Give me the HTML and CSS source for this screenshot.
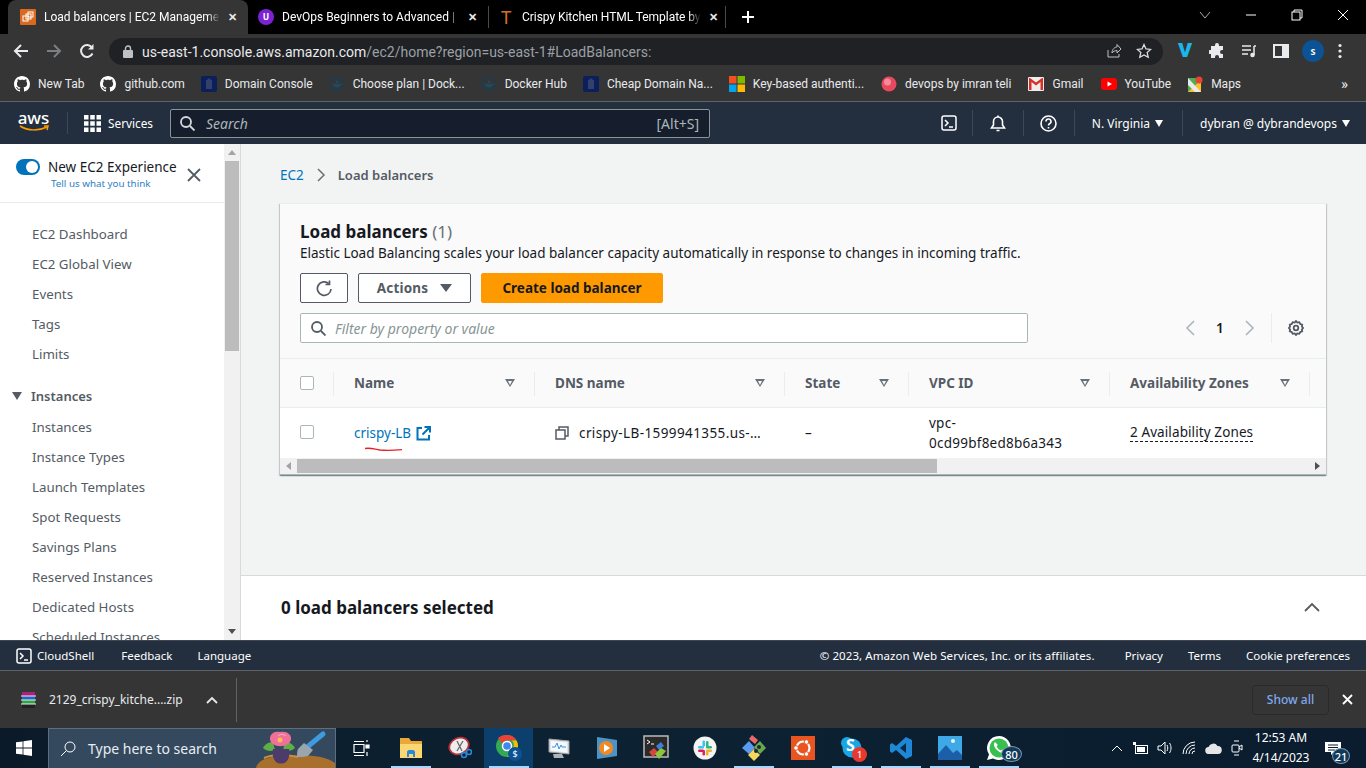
FILE: index.html
```html
<!DOCTYPE html>
<html lang="en">
<head>
    <meta charset="UTF-8">
    <title>Load balancers | EC2 Management Console</title>
    <link rel="stylesheet" href="styles.css">
</head>
<body>
    <!-- browser tabs -->
    <div class="tabstrip">
        <div class="tab active">
            <span class="favicon fav-ec2"><svg width="12" height="12" viewBox="0 0 12 12" fill="none" stroke="#fff" stroke-width="1"><rect x="1" y="5" width="5" height="5"/><rect x="4" y="3" width="5" height="5"/><rect x="6" y="1" width="5" height="5"/></svg></span>
            <span class="tab-title">Load balancers | EC2 Manageme</span>
            <span class="tab-x">✕</span>
        </div>
        <div class="tab">
            <span class="favicon fav-udemy">U</span>
            <span class="tab-title">DevOps Beginners to Advanced |</span>
            <span class="tab-x">✕</span>
        </div>
        <div class="tab last">
            <span class="favicon fav-t">T</span>
            <span class="tab-title">Crispy Kitchen HTML Template by</span>
            <span class="tab-x">✕</span>
        </div>
        <svg class="new-tab" width="14" height="14" viewBox="0 0 14 14" stroke="#fff" stroke-width="2"><path d="M7 1v12M1 7h12"/></svg>
        <div class="win-controls">
            <svg width="14" height="14" viewBox="0 0 14 14" fill="none" stroke="#aaa"><path d="M2 4l5 6 5-6"/></svg>
            <svg width="14" height="14" viewBox="0 0 14 14" fill="none" stroke="#fff"><path d="M2 7h10"/></svg>
            <svg width="14" height="14" viewBox="0 0 14 14" fill="none" stroke="#fff"><rect x="2" y="4" width="8" height="8"/><path d="M4 4V2h8v8h-2"/></svg>
            <svg width="14" height="14" viewBox="0 0 14 14" fill="none" stroke="#fff"><path d="M2 2l10 10M12 2L2 12"/></svg>
        </div>
    </div>

    <!-- address bar -->
    <div class="toolbar">
        <svg class="nav-btn" width="16" height="16" viewBox="0 0 16 16" fill="none" stroke="#e8eaed" stroke-width="2"><path d="M15 8H2M8 2L2 8l6 6"/></svg>
        <svg class="nav-btn" width="16" height="16" viewBox="0 0 16 16" fill="none" stroke="#7c7f82" stroke-width="2"><path d="M1 8h13M8 2l6 6-6 6"/></svg>
        <svg class="nav-btn" width="16" height="16" viewBox="0 0 16 16" fill="none" stroke="#e8eaed" stroke-width="2"><path d="M13.500 10.500A6 6 0 1 1 13 4.500"/><path d="M14.500 1v5.500H9z" fill="#e8eaed" stroke="none"/></svg>
        <div class="omnibox">
            <svg width="10" height="13" viewBox="0 0 10 13" fill="#bdc1c6"><rect y="5" width="10" height="8" rx="1"/><path d="M2.500 5V3.500a2.500 2.500 0 0 1 5 0V5" fill="none" stroke="#bdc1c6" stroke-width="1.400"/></svg>
            <span class="url"><b>us-east-1.console.aws.amazon.com</b>/ec2/home?region=us-east-1#LoadBalancers:</span>
            <svg class="omni-right" width="16" height="16" viewBox="0 0 16 16" fill="none" stroke="#bdc1c6"><path d="M2 7v7h11v-3M6 10c0-4 3-6 5-6V1.500l4 4.500-4 4V7.500c-2 0-4 1-5 2.500z"/></svg>
            <svg width="16" height="16" viewBox="0 0 16 16" fill="none" stroke="#dadce0" stroke-width="1.300"><path d="M8 1.500l2 4.400 4.700.5-3.500 3.200 1 4.700L8 11.900l-4.200 2.400 1-4.700L1.300 6.400 6 5.900z"/></svg>
        </div>
        <div class="ext-icons">
            <span class="vimeo">v</span>
            <svg width="16" height="16" viewBox="0 0 16 16" fill="#e8eaed"><path d="M6 2a2 2 0 0 1 4 0v1h4v4h-1a2 2 0 0 0 0 4h1v4h-4v-1a2 2 0 0 0-4 0v1H2v-4H1a2 2 0 0 1 0-4h1V3h4z"/></svg>
            <svg width="16" height="16" viewBox="0 0 16 16" fill="none" stroke="#e8eaed" stroke-width="1.500"><path d="M1 3h9M1 7h9M1 11h6M13 3h2M13 3v9"/><circle cx="11.500" cy="12" r="1.500" fill="#e8eaed"/></svg>
            <svg width="16" height="16" viewBox="0 0 16 16"><rect x="1" y="2" width="14" height="12" fill="none" stroke="#e8eaed" stroke-width="2"/><rect x="9" y="2" width="6" height="12" fill="#e8eaed"/></svg>
            <span class="avatar">S</span>
            <svg width="4" height="16" viewBox="0 0 4 16" fill="#e8eaed"><circle cx="2" cy="2.500" r="1.600"/><circle cx="2" cy="8" r="1.600"/><circle cx="2" cy="13.500" r="1.600"/></svg>
        </div>
    </div>

    <!-- bookmarks -->
    <div class="bookmarks">
        <div class="bm"><svg width="16" height="16" viewBox="0 0 16 16" fill="#fff"><path d="M8 0C3.580 0 0 3.580 0 8c0 3.540 2.290 6.530 5.470 7.590.4.070.55-.17.55-.38 0-.19-.01-.82-.01-1.490-2.010.37-2.530-.49-2.690-.94-.09-.23-.48-.94-.82-1.130-.28-.15-.68-.52-.01-.53.63-.01 1.080.58 1.230.82.72 1.210 1.870.87 2.330.66.070-.52.28-.87.51-1.070-1.780-.2-3.640-.89-3.640-3.950 0-.87.31-1.590.82-2.150-.08-.2-.36-1.020.08-2.120 0 0 .67-.21 2.200.82.64-.18 1.320-.27 2-.27.68 0 1.360.09 2 .27 1.530-1.040 2.200-.82 2.200-.82.44 1.100.16 1.920.08 2.120.51.56.82 1.270.82 2.150 0 3.070-1.870 3.750-3.650 3.950.29.25.54.73.54 1.480 0 1.070-.01 1.930-.01 2.200 0 .21.15.46.55.38A8.013 8.013 0 0 0 16 8c0-4.420-3.580-8-8-8z"/></svg>New Tab</div>
        <div class="bm"><svg width="16" height="16" viewBox="0 0 16 16" fill="#fff"><path d="M8 0C3.580 0 0 3.580 0 8c0 3.540 2.290 6.530 5.470 7.590.4.070.55-.17.55-.38 0-.19-.01-.82-.01-1.490-2.010.37-2.530-.49-2.690-.94-.09-.23-.48-.94-.82-1.130-.28-.15-.68-.52-.01-.53.63-.01 1.080.58 1.230.82.72 1.210 1.870.87 2.330.66.070-.52.28-.87.51-1.070-1.780-.2-3.640-.89-3.640-3.950 0-.87.31-1.590.82-2.150-.08-.2-.36-1.020.08-2.120 0 0 .67-.21 2.200.82.64-.18 1.320-.27 2-.27.68 0 1.360.09 2 .27 1.530-1.040 2.200-.82 2.200-.82.44 1.100.16 1.920.08 2.120.51.56.82 1.270.82 2.150 0 3.070-1.870 3.750-3.650 3.950.29.25.54.73.54 1.480 0 1.070-.01 1.930-.01 2.200 0 .21.15.46.55.38A8.013 8.013 0 0 0 16 8c0-4.420-3.580-8-8-8z"/></svg>github.com</div>
        <div class="bm"><svg width="16" height="16" viewBox="0 0 16 16"><rect width="16" height="16" rx="2" fill="#0a1f5c"/><rect x="5" y="4" width="6" height="9" fill="#33406a"/><rect x="6.500" y="2.500" width="3" height="1.500" fill="#33406a"/></svg>Domain Console</div>
        <div class="bm"><svg width="16" height="16" viewBox="0 0 16 16" fill="none"><circle cx="8" cy="8" r="7" stroke="#1d3c52" stroke-width="1.500"/><path d="M3.500 8h8c.5-1 1-1.500 1.500-1.500-.5 3-2.500 5-5.500 5-2 0-3.500-1.500-4-3.500z" fill="#1d4a66"/><path d="M7 4l4 3H7z" fill="#1d4a66"/></svg>Choose plan | Dock...</div>
        <div class="bm"><svg width="16" height="16" viewBox="0 0 16 16" fill="none"><circle cx="8" cy="8" r="7" stroke="#1d3c52" stroke-width="1.500"/><path d="M3.500 8h8c.5-1 1-1.500 1.500-1.500-.5 3-2.500 5-5.500 5-2 0-3.500-1.500-4-3.500z" fill="#1d4a66"/><path d="M7 4l4 3H7z" fill="#1d4a66"/></svg>Docker Hub</div>
        <div class="bm"><svg width="16" height="16" viewBox="0 0 16 16"><rect width="16" height="16" rx="2" fill="#0a1f5c"/><rect x="5" y="4" width="6" height="9" fill="#33406a"/><rect x="6.500" y="2.500" width="3" height="1.500" fill="#33406a"/></svg>Cheap Domain Na...</div>
        <div class="bm"><svg width="16" height="16" viewBox="0 0 16 16"><rect width="7.500" height="7.500" fill="#f25022"/><rect x="8.500" width="7.500" height="7.500" fill="#7fba00"/><rect y="8.500" width="7.500" height="7.500" fill="#00a4ef"/><rect x="8.500" y="8.500" width="7.500" height="7.500" fill="#ffb900"/></svg>Key-based authenti...</div>
        <div class="bm"><svg width="16" height="16" viewBox="0 0 16 16"><circle cx="8" cy="8" r="7.500" fill="#e8495f"/><circle cx="6.500" cy="6" r="3.500" fill="#f58a98"/></svg>devops by imran teli</div>
        <div class="bm"><svg width="16" height="14" viewBox="0 0 16 14"><rect width="16" height="14" rx="1" fill="#eee"/><path d="M1 1v12h2.500V5L8 8.500 12.500 5v8H15V1h-1L8 5.500 2 1z" fill="#d93025"/></svg>Gmail</div>
        <div class="bm"><svg width="16" height="12" viewBox="0 0 16 12"><rect width="16" height="12" rx="3" fill="#f00"/><path d="M6.500 3.500v5L11 6z" fill="#fff"/></svg>YouTube</div>
        <div class="bm"><svg width="15" height="16" viewBox="0 0 15 16"><rect y="2" width="13" height="14" fill="#4caf50"/><path d="M0 16L13 4v12z" fill="#fbc02d"/><path d="M0 2l13 14H7L0 9z" fill="#e8eaed"/><circle cx="11" cy="4" r="3.500" fill="#ea4335"/></svg>Maps</div>
        <span class="bm-more">»</span>
    </div>

    <!-- aws console header -->
    <header class="aws-nav">
        <div class="aws-logo"><span>aws</span><svg width="30" height="7" viewBox="0 0 30 7" fill="none" stroke="#f90" stroke-width="1.500"><path d="M1 1c8 5 19 5 27 1"/><path d="M25 1l4 0-1 4"/></svg></div>
        <div class="nav-sep"></div>
        <div class="services">
            <svg width="17" height="17" viewBox="0 0 17 17" fill="#fff"><rect width="4.500" height="4.500"/><rect x="6.250" width="4.500" height="4.500"/><rect x="12.500" width="4.500" height="4.500"/><rect y="6.250" width="4.500" height="4.500"/><rect x="6.250" y="6.250" width="4.500" height="4.500"/><rect x="12.500" y="6.250" width="4.500" height="4.500"/><rect y="12.500" width="4.500" height="4.500"/><rect x="6.250" y="12.500" width="4.500" height="4.500"/><rect x="12.500" y="12.500" width="4.500" height="4.500"/></svg>
            <span>Services</span>
        </div>
        <div class="nav-search">
            <svg width="15" height="15" viewBox="0 0 15 15" fill="none" stroke="#d5dbdb" stroke-width="1.800"><circle cx="6" cy="6" r="5"/><path d="M10 10l4.500 4.500"/></svg>
            <em>Search</em>
            <span class="shortcut">[Alt+S]</span>
        </div>
        <div class="nav-right">
            <div class="nav-cell icon-cell"><svg width="16" height="16" viewBox="0 0 16 16" fill="none" stroke="#fff" stroke-width="1.500"><rect x="1" y="1" width="14" height="14" rx="2"/><path d="M4 5l3 3-3 3M8 12h4"/></svg></div>
            <div class="nav-cell icon-cell"><svg width="16" height="17" viewBox="0 0 16 17" fill="none" stroke="#fff" stroke-width="1.600"><path d="M1.500 13h13L12.500 10V6.500a4.500 4.500 0 0 0-9 0V10z"/><path d="M6.500 15.500h3M8 2V.5"/></svg></div>
            <div class="nav-cell icon-cell"><svg width="17" height="17" viewBox="0 0 17 17" fill="none" stroke="#fff" stroke-width="1.600"><circle cx="8.500" cy="8.500" r="7.500"/><path d="M6 6.500a2.500 2.500 0 1 1 3.500 2.300c-.7.4-1 .8-1 1.700M8.500 12v1.500"/></svg></div>
            <div class="nav-cell region">N. Virginia<i class="caret"></i></div>
            <div class="nav-cell user">dybran @ dybrandevops<i class="caret"></i></div>
        </div>
    </header>

    <div class="console">
        <aside class="sidebar">
            <div class="side-inner">
                <div class="experience">
                    <span class="toggle"></span>
                    <div class="exp-text">
                        <div class="exp-title">New EC2 Experience</div>
                        <div class="exp-link">Tell us what you think</div>
                    </div>
                    <svg class="exp-close" width="14" height="14" viewBox="0 0 14 14" fill="none" stroke="#545b64" stroke-width="1.800"><path d="M1 1l12 12M13 1L1 13"/></svg>
                </div>
                <nav class="side-nav">
                    <a>EC2 Dashboard</a>
                    <a>EC2 Global View</a>
                    <a>Events</a>
                    <a>Tags</a>
                    <a>Limits</a>
                    <div class="side-group"><i class="tri"></i>Instances</div>
                    <a>Instances</a>
                    <a>Instance Types</a>
                    <a>Launch Templates</a>
                    <a>Spot Requests</a>
                    <a>Savings Plans</a>
                    <a>Reserved Instances</a>
                    <a>Dedicated Hosts</a>
                    <a>Scheduled Instances</a>
                </nav>
            </div>
            <div class="side-scroll">
                <i class="arrow-up"></i>
                <div class="side-thumb"></div>
                <i class="arrow-down"></i>
            </div>
        </aside>

        <main class="content">
            <div class="content-top">
                <div class="crumbs">
                    <a>EC2</a>
                    <svg width="10" height="14" viewBox="0 0 10 14" fill="none" stroke="#687078" stroke-width="1.500"><path d="M2 1l6 6-6 6"/></svg>
                    <span>Load balancers</span>
                </div>

                <section class="card">
                    <div class="card-head">
                        <h2>Load balancers <span>(1)</span></h2>
                        <p>Elastic Load Balancing scales your load balancer capacity automatically in response to changes in incoming traffic.</p>
                        <div class="actions">
                            <button class="btn btn-refresh"><svg width="17" height="17" viewBox="0 0 17 17" fill="none" stroke="#545b64" stroke-width="1.700"><path d="M15 9a6.800 6.800 0 1 1-2.200-5.400"/><path d="M13.500 .5V4.500H9.500"/></svg></button>
                            <button class="btn btn-actions">Actions<i class="caret dark"></i></button>
                            <button class="btn btn-primary">Create load balancer</button>
                        </div>
                        <div class="filter-row">
                            <div class="filter">
                                <svg width="15" height="15" viewBox="0 0 15 15" fill="none" stroke="#545b64" stroke-width="1.800"><circle cx="6" cy="6" r="5"/><path d="M10 10l4.500 4.500"/></svg>
                                <em>Filter by property or value</em>
                            </div>
                            <div class="pager">
                                <svg width="10" height="16" viewBox="0 0 10 16" fill="none" stroke="#aab7b8" stroke-width="1.600"><path d="M9 1L2 8l7 7"/></svg>
                                <b>1</b>
                                <svg width="10" height="16" viewBox="0 0 10 16" fill="none" stroke="#aab7b8" stroke-width="1.600"><path d="M1 1l7 7-7 7"/></svg>
                                <span class="pager-sep"></span>
                                <svg width="16" height="16" viewBox="0 0 16 16" fill="none" stroke="#545b64" stroke-width="1.800"><path d="M8 1l1.300 1.600 2-.4 1 1.800 1.900.6-.3 2L15 8l-1.100 1.400.3 2-1.900.6-1 1.800-2-.4L8 15l-1.300-1.600-2 .4-1-1.800-1.900-.6.3-2L1 8l1.100-1.400-.3-2 1.900-.6 1-1.800 2 .4z"/><circle cx="8" cy="8" r="2.300"/></svg>
                            </div>
                        </div>
                    </div>

                    <div class="table">
                        <div class="t-row t-header">
                            <div class="t-cell t-check"><span class="checkbox"></span></div>
                            <div class="t-cell"><span>Name</span><i class="sort"></i></div>
                            <div class="t-cell"><span>DNS name</span><i class="sort"></i></div>
                            <div class="t-cell"><span>State</span><i class="sort"></i></div>
                            <div class="t-cell"><span>VPC ID</span><i class="sort"></i></div>
                            <div class="t-cell"><span>Availability Zones</span><i class="sort"></i></div>
                        </div>
                        <div class="t-row t-body">
                            <div class="t-cell t-check"><span class="checkbox"></span></div>
                            <div class="t-cell t-name">
                                <a>crispy-LB</a>
                                <svg width="15" height="15" viewBox="0 0 15 15" fill="none" stroke="#0073bb" stroke-width="2"><path d="M6 2H1.500v11.500H13V9M8.500 1H14v5.500M14 1L6.500 8.500"/></svg>
                                <svg class="scribble" width="40" height="5" viewBox="0 0 40 5" fill="none" stroke="#e5202a" stroke-width="1.300"><path d="M1 1.500c6-1 9 .6 15 1.500 7 .6 14 .3 22-.3"/></svg>
                            </div>
                            <div class="t-cell t-dns">
                                <svg width="14" height="14" viewBox="0 0 14 14" fill="none" stroke="#545b64" stroke-width="1.500"><rect x="1" y="4" width="9" height="9"/><path d="M4 4V1h9v9h-3"/></svg>
                                <span>crispy-LB-1599941355.us-…</span>
                            </div>
                            <div class="t-cell">–</div>
                            <div class="t-cell t-vpc">vpc-<br>0cd99bf8ed8b6a343</div>
                            <div class="t-cell"><span class="dashed">2 Availability Zones</span></div>
                        </div>
                    </div>
                    <div class="h-scroll">
                        <i class="arrow-left"></i>
                        <div class="h-track"><div class="h-thumb"></div></div>
                        <i class="arrow-right"></i>
                    </div>
                </section>
            </div>
            <div class="split-panel">
                <h3>0 load balancers selected</h3>
                <svg width="16" height="10" viewBox="0 0 16 10" fill="none" stroke="#545b64" stroke-width="1.800"><path d="M1 9l7-7 7 7"/></svg>
            </div>
        </main>
    </div>

    <footer class="aws-footer">
        <svg width="16" height="16" viewBox="0 0 16 16" fill="none" stroke="#fff" stroke-width="1.500"><rect x="1" y="1" width="14" height="14" rx="2"/><path d="M4 5l3 3-3 3M8 12h4"/></svg>
        <span class="cs">CloudShell</span>
        <span>Feedback</span>
        <span>Language</span>
        <div class="foot-right">
            <span class="copy">© 2023, Amazon Web Services, Inc. or its affiliates.</span>
            <span>Privacy</span>
            <span>Terms</span>
            <span>Cookie preferences</span>
        </div>
    </footer>

    <div class="downloads">
        <svg width="18" height="18" viewBox="0 0 18 18"><rect x="2" y="1" width="13" height="4" fill="#a6247d"/><rect x="2" y="5" width="13" height="4" fill="#2a62c8"/><rect x="2" y="9" width="13" height="4" fill="#2fa54a"/><rect x="2" y="13" width="13" height="4" fill="#222"/><path d="M1 5h15M1 9h15M1 13h15" stroke="#eee"/></svg>
        <span class="dl-name">2129_crispy_kitche....zip</span>
        <svg class="dl-chev" width="12" height="8" viewBox="0 0 12 8" fill="none" stroke="#e8eaed" stroke-width="1.800"><path d="M1 7l5-5 5 5"/></svg>
        <span class="dl-sep"></span>
        <button class="show-all">Show all</button>
        <svg class="dl-close" width="11" height="11" viewBox="0 0 11 11" fill="none" stroke="#fff" stroke-width="1.800"><path d="M1 1l9 9M10 1l-9 9"/></svg>
    </div>

    <div class="taskbar">
        <div class="start"><svg width="16" height="16" viewBox="0 0 16 16" fill="#fff"><path d="M0 2.300l6.600-.9v6.200H0zM7.400 1.300L16 0v7.600H7.400zM0 8.400h6.600v6.200L0 13.700zM7.400 8.400H16V16l-8.600-1.300z"/></svg></div>
        <div class="win-search">
            <svg width="16" height="16" viewBox="0 0 16 16" fill="none" stroke="#fff"><circle cx="10" cy="6" r="5"/><path d="M6.500 9.500L1 15"/></svg>
            <span>Type here to search</span>
            <svg class="flower" width="80" height="40" viewBox="0 0 80 40"><path d="M0 40c2-8 12-12 30-12 20-2 42 0 50 8v4z" fill="#a8702c"/><path d="M8 30c10-4 24-3 34-1" stroke="#c88f3e" stroke-width="2" fill="none"/><path d="M7 20c2-4 6-6 10-6l2 8c-4 2-9 1-12-2zM39 20c-2-4-6-6-10-6l-2 8c4 2 9 1 12-2z" fill="#5fae46"/><path d="M17 21h16c1 5 0 10-3 13-3 2-7 2-10 0-3-3-4-8-3-13z" fill="#4c3b6b"/><path d="M24 4c4-1 8 0 10 3 2 3 1 7-2 9-4 3-11 3-15 0-3-2-4-6-2-9 2-3 5-4 9-3z" fill="#f0709a"/><circle cx="24" cy="12" r="2.500" fill="#f5c04f"/><path d="M22 8c2-2 6-2 8 0" stroke="#f9b5cb" fill="none"/><path d="M50 20L67 6" stroke="#3f9be0" stroke-width="5" stroke-linecap="round"/><path d="M48 15l9 7-5 6c-3 1-8 1-11 1 0-3 0-6 1-8z" fill="#9aa5ad"/></svg>
        </div>
        <div class="task-view"><svg width="17" height="19" viewBox="0 0 17 19" fill="none" stroke="#fff" stroke-width="1.200"><path d="M1 2.500h10M1 5.500h10v8H1zM1 16.500h10M14 1v2M14 13v4"/><path d="M13 6h3v3h-3z" fill="#fff"/></svg></div>
        <div class="task-icons">
            <div class="task open"><svg width="24" height="22" viewBox="0 0 24 22"><path d="M1 1h9l2 3h11v17H1z" fill="#e8a93a"/><rect x="1" y="7" width="22" height="14" fill="#fbd774"/><path d="M8 20v-5c0-1 1-2 2-2h4c1 0 2 1 2 2v5h-2v-3h-4v3z" fill="#2b88d8"/></svg></div>
            <div class="task"><svg width="24" height="24" viewBox="0 0 24 24"><ellipse cx="11" cy="10" rx="10" ry="8" transform="rotate(-25 11 10)" fill="#ededed" stroke="#b9303a" stroke-width="1.800"/><path d="M9 5l5 10M15 5l-6 10" stroke="#666" stroke-width="1.300"/><circle cx="16" cy="19" r="2.500" fill="none" stroke="#2b88d8" stroke-width="1.600"/><circle cx="21" cy="16" r="2.500" fill="none" stroke="#2b88d8" stroke-width="1.600"/></svg></div>
            <div class="task active open"><svg width="28" height="28" viewBox="0 0 28 28"><circle cx="12" cy="12" r="11" fill="#34a853"/><path d="M12 1a11 11 0 0 1 9.500 5.500H12A5.500 5.500 0 0 0 7 9.500L3 4A11 11 0 0 1 12 1z" fill="#ea4335"/><path d="M21.500 6.500A11 11 0 0 1 12 23l5-8a5.500 5.500 0 0 0 0-8.500z" fill="#fbbc05"/><circle cx="12" cy="12" r="4.500" fill="#4285f4" stroke="#fff" stroke-width="1.500"/><circle cx="20" cy="20" r="7" fill="#0b5394"/><text x="20" y="23" class="s-badge">$</text></svg></div>
            <div class="task"><svg width="24" height="24" viewBox="0 0 24 24"><path d="M3 3l20 2v13L3 16z" fill="#dfe3e6" stroke="#9aa0a4"/><path d="M5 5l16 1.500v10L5 14.500z" fill="#f4f9fd"/><path d="M6 11h3l2-4 2 6 2-4 1 2h4" fill="none" stroke="#3c8fd6"/><path d="M7 18h9l2 4H8z" fill="#aeb4b8"/></svg></div>
            <div class="task"><svg width="22" height="24" viewBox="0 0 22 24"><path d="M1 1l20 3v16L1 23z" fill="#4f93c4"/><circle cx="10" cy="12" r="7" fill="#f08a24"/><path d="M8 8l6 4-6 4z" fill="#fff"/></svg></div>
            <div class="task"><svg width="26" height="26" viewBox="0 0 26 26"><rect x="1" y="1" width="24" height="21" fill="#2a2a2a" stroke="#bbb" stroke-width="1.500"/><path d="M4 5l3 2-3 2M8 9h3" stroke="#fff" fill="none"/><path d="M6 17l5-4 4 4-5 5z" fill="#d8453d"/><path d="M13 11l5-4 3 4-5 4z" fill="#3b7fd6"/><path d="M12 19l6-6 5 3-7 8z" fill="#8cc63f"/></svg></div>
            <div class="task"><svg width="24" height="24" viewBox="0 0 24 24"><circle cx="12" cy="12" r="11.500" fill="#f4f4f4"/><rect x="5" y="10" width="6" height="2.500" rx="1.200" fill="#36c5f0"/><rect x="9.500" y="4.500" width="2.500" height="6" rx="1.200" fill="#36c5f0"/><rect x="13" y="5" width="2.500" height="6" rx="1.200" fill="#2eb67d"/><rect x="13" y="10" width="6" height="2.500" rx="1.200" fill="#2eb67d"/><rect x="13" y="13.500" width="6" height="2.500" rx="1.200" fill="#ecb22e"/><rect x="13" y="14" width="2.500" height="5.500" rx="1.200" fill="#ecb22e"/><rect x="5" y="13.500" width="6" height="2.500" rx="1.200" fill="#e01e5a"/><rect x="9.500" y="14" width="2.500" height="5.500" rx="1.200" fill="#e01e5a"/></svg></div>
            <div class="task open"><svg width="26" height="28" viewBox="0 0 26 28"><path d="M1 14l7-7 6 7-6 6z" fill="#5a9bef"/><path d="M13 13l6-6 6 7-6 6z" fill="#6aa84f"/><path d="M7 21l6-6 6 6-6 6z" fill="#f5d75f"/><path d="M8 5l3-4 6 5-3 4z" fill="#e8696a"/><circle cx="15" cy="17" r="2" fill="#1b2a33"/><circle cx="18" cy="13" r="2" fill="#1b2a33"/></svg></div>
            <div class="task"><svg width="24" height="24" viewBox="0 0 24 24"><rect width="24" height="24" fill="#e95420"/><circle cx="12" cy="12" r="6.500" fill="none" stroke="#fff" stroke-width="2.200"/><circle cx="5" cy="12" r="2.300" fill="#fff" stroke="#e95420"/><circle cx="15.500" cy="6" r="2.300" fill="#fff" stroke="#e95420"/><circle cx="15.500" cy="18" r="2.300" fill="#fff" stroke="#e95420"/></svg></div>
            <div class="task open"><svg width="24" height="24" viewBox="0 0 24 24"><circle cx="7" cy="7" r="6" fill="#1aa6e4"/><circle cx="17" cy="17" r="6" fill="#1aa6e4"/><circle cx="12" cy="12" r="9.500" fill="#1aa6e4"/></svg><span class="s-glyph">S</span><span class="badge red">1</span></div>
            <div class="task open"><svg width="24" height="24" viewBox="0 0 24 24"><path d="M17 1l6 3v16l-6 3L7 14l-4 3-2-1.500V8.500L3 7l4 3z" fill="#1e88d6"/><path d="M17 7l-6 5 6 5z" fill="#0c2a42"/></svg></div>
            <div class="task open"><svg width="24" height="24" viewBox="0 0 24 24"><rect width="24" height="24" fill="#3fa9e8"/><path d="M0 18l8-9 7 8 4-3 5 5v5H0z" fill="#1c5fa8"/><circle cx="15" cy="5" r="2" fill="#e6f5fd"/></svg></div>
            <div class="task open"><svg width="26" height="26" viewBox="0 0 26 26"><path d="M13 1a12 12 0 0 0-10 18.500L1 25l6-1.500A12 12 0 1 0 13 1z" fill="#fff"/><circle cx="13" cy="13" r="9.500" fill="#37c04f"/><path d="M9 7c-2 2-1 5 2 8s6 4 8 2l-2.500-2.500-2 1c-1.500-.8-3-2.300-3.800-3.800l1-2z" fill="#fff"/></svg><span class="badge dark wa">80</span></div>
        </div>
        <div class="tray">
            <svg width="12" height="8" viewBox="0 0 12 8" fill="none" stroke="#fff"><path d="M1 7l5-5 5 5"/></svg>
            <svg width="16" height="12" viewBox="0 0 16 12" fill="#fff"><rect x="3.500" y="3.500" width="12" height="8" fill="none" stroke="#fff"/><rect x="5" y="5" width="8" height="5"/><path d="M1 0v3h3V0M2.500 3v3"/></svg>
            <svg width="16" height="14" viewBox="0 0 16 14" fill="none" stroke="#fff"><path d="M1 5h3l4-4v12l-4-4H1zM10 4c1 2 1 4 0 6M12.500 2c2 3 2 7 0 10"/></svg>
            <svg width="14" height="14" viewBox="0 0 14 14" fill="none" stroke="#fff"><path d="M1 13a12 12 0 0 1 12-12M4 13a9 9 0 0 1 9-9M7 13a6 6 0 0 1 6-6M10 13a3 3 0 0 1 3-3"/></svg>
            <svg width="17" height="11" viewBox="0 0 17 11" fill="#e6e6e6"><path d="M4 11a3.500 3.500 0 0 1-.5-7A5 5 0 0 1 12.500 3 4 4 0 0 1 13 11z"/></svg>
            <svg width="12" height="18" viewBox="0 0 12 18" fill="none" stroke="#fff"><rect x="1" y="6" width="7" height="7" rx="1"/><path d="M8 8l3-2v5l-3-2M3 2h5M3 16h5"/></svg>
            <div class="clock"><div>12:53 AM</div><div>4/14/2023</div></div>
            <div class="notif">
                <svg width="16" height="13" viewBox="0 0 16 13" fill="#fff"><path d="M0 0h16v10H9l-3 3v-3H0z"/><path d="M3 3h10M3 5.500h10M3 8h7" stroke="#0b1c2b"/></svg>
                <span class="badge dark">21</span>
            </div>
        </div>
    </div>
</body>
</html>
```

FILE: styles.css
```css
* {
    box-sizing: border-box;
}

html, body {
    margin: 0;
    padding: 0;
}

body {
    width: 1366px;
    height: 768px;
    overflow: hidden;
    display: flex;
    flex-direction: column;
    font-family: "Noto Sans", "Open Sans", sans-serif;
    font-size: 13.5px;
    background: #f2f3f3;
}

svg {
    flex: none;
    display: block;
}

/* browser chrome */
.tabstrip {
    height: 34px;
    background: #000;
    color: #fff;
    display: flex;
    align-items: flex-end;
    padding-left: 8px;
    flex: none;
    font-family: Roboto, sans-serif;
}

.tab {
    width: 240px;
    height: 34px;
    padding: 0 11px 0 10px;
    display: flex;
    align-items: center;
    gap: 8px;
    font-size: 12px;
    position: relative;
    white-space: nowrap;
}

.tab.active {
    background: #353535;
    border-radius: 8px 8px 0 0;
    padding-left: 12px;
}

.tab.last {
    width: 238px;
    border-left: 1px solid #4a4a4a;
    border-right: 1px solid #4a4a4a;
    height: 22px;
    margin-bottom: 6px;
    padding: 0 7px 0 9px;
    letter-spacing: -.05px;
}

.tab-title {
    flex: 1;
    -webkit-mask-image: linear-gradient(90deg, #000 93%, transparent);
    mask-image: linear-gradient(90deg, #000 93%, transparent);
}

.tab-x {
    font-size: 11px;
    font-weight: 700;
    color: #e8eaed;
}

.favicon {
    width: 16px;
    height: 16px;
    flex: none;
    display: flex;
    align-items: center;
    justify-content: center;
}

.fav-ec2 {
    background: #d9691e;
    border-radius: 1px;
}

.fav-udemy {
    background: #7b22d4;
    border-radius: 50%;
    font-size: 9px;
    font-weight: 700;
}

.fav-t {
    color: #d9701e;
    font-size: 18px;
}

.new-tab {
    margin-left: 15px;
    margin-bottom: 10px;
}

.win-controls {
    margin-left: auto;
    width: 184px;
    height: 30px;
    align-self: flex-start;
    display: flex;
    align-items: center;
    justify-content: space-between;
    padding: 0 16px;
}

.toolbar {
    height: 34px;
    flex: none;
    background: #353535;
    display: flex;
    align-items: center;
    padding-left: 13px;
}

.nav-btn {
    margin-right: 17px;
}

.nav-btn:nth-child(3) {
    margin-right: 14px;
}

.omnibox {
    width: 1054px;
    height: 27px;
    background: #202124;
    border-radius: 14px;
    display: flex;
    align-items: center;
    padding: 0 11px 0 14px;
    color: #9aa0a6;
    font-family: Roboto, sans-serif;
    font-size: 14px;
}

.url {
    margin: 1px 0 0 9px;
    flex: 1;
    white-space: nowrap;
}

.url b {
    font-weight: 400;
    color: #e8eaed;
}

.omni-right {
    margin-right: 14px;
}

.ext-icons {
    flex: 1;
    display: flex;
    align-items: center;
    padding-left: 14px;
    gap: 16px;
}

.vimeo {
    color: #1ab7ea;
    font-weight: 800;
    font-size: 24px;
    line-height: 24px;
    margin-top: -6px;
    width: 16px;
    display: flex;
    justify-content: center;
}

.avatar {
    width: 22px;
    height: 22px;
    border-radius: 50%;
    background: #0b5394;
    color: #fff;
    font-size: 9px;
    font-weight: 700;
    display: flex;
    align-items: center;
    justify-content: center;
    margin: 0 -2px 0 -3px;
}

.bookmarks {
    height: 34px;
    flex: none;
    background: #353535;
    border-bottom: 1px solid #5f6368;
    display: flex;
    align-items: center;
    padding: 0 0 1px 14px;
    gap: 16px;
    color: #e8eaed;
    font-family: Roboto, sans-serif;
    font-size: 12px;
    white-space: nowrap;
}

.bm {
    display: flex;
    align-items: center;
    gap: 8px;
}

.bm:nth-child(n+8) {
    margin-left: 1px;
}

.bm-more {
    margin-left: auto;
    margin-right: 18px;
    font-size: 15px;
}

/* aws header */
.aws-nav {
    height: 42px;
    flex: none;
    background: #232f3e;
    color: #fff;
    display: flex;
    align-items: center;
    padding-left: 18px;
}

.aws-logo {
    width: 31px;
    display: flex;
    flex-direction: column;
    align-items: center;
    margin-top: -3px;
}

.aws-logo span {
    font-size: 17px;
    line-height: 14px;
    font-weight: 500;
}

.nav-sep {
    width: 1px;
    height: 22px;
    background: #414750;
    margin: 0 16px 0 18px;
}

.services {
    display: flex;
    align-items: center;
    gap: 7px;
    width: 86px;
    font-size: 11.800px;
}

.nav-search {
    width: 540px;
    height: 29px;
    background: #161e2d;
    border: 1px solid #879596;
    border-radius: 2px;
    display: flex;
    align-items: center;
    padding: 0 10px 0 9px;
    color: #aab7b8;
    gap: 11px;
    font-size: 14px;
}

.shortcut {
    margin-left: auto;
}

.nav-right {
    margin-left: auto;
    display: flex;
    align-items: center;
    font-size: 12px;
    white-space: nowrap;
}

.nav-cell {
    height: 26px;
    display: flex;
    align-items: center;
    border-left: 1px solid #414750;
}

.icon-cell {
    width: 51px;
    justify-content: center;
}

.icon-cell:first-child {
    border-left: 0;
    width: 45px;
}

.region {
    padding: 0 19px 0 17px;
}

.user {
    padding: 0 16px 0 17px;
}

.caret {
    display: inline-block;
    width: 0;
    height: 0;
    border-left: 4.500px solid transparent;
    border-right: 4.500px solid transparent;
    border-top: 7px solid #fff;
    margin-left: 5px;
}

.caret.dark {
    border-top-color: #545b64;
    border-left-width: 6px;
    border-right-width: 6px;
    border-top-width: 8px;
    margin-left: 12px;
}

/* console body */
.console {
    height: 496px;
    flex: none;
    display: flex;
    overflow: hidden;
}

.sidebar {
    width: 241px;
    flex: none;
    display: flex;
    border-right: 1px solid #d5dbdb;
    background: #fff;
}

.side-inner {
    width: 224px;
    overflow: hidden;
}

.experience {
    height: 59px;
    border-bottom: 1px solid #eaeded;
    display: flex;
    padding: 15px 0 0 16px;
    position: relative;
}

.toggle {
    width: 24px;
    height: 16px;
    border-radius: 8px;
    background: #0073bb;
    position: relative;
    flex: none;
}

.toggle::after {
    content: "";
    position: absolute;
    right: 2px;
    top: 2px;
    width: 12px;
    height: 12px;
    background: #fff;
    border-radius: 50%;
}

.exp-text {
    margin-left: 8px;
}

.exp-title {
    color: #16191f;
    line-height: 16px;
    white-space: nowrap;
}

.exp-link {
    color: #2d7fc4;
    font-size: 9.800px;
    line-height: 16px;
    margin: 1px 0 0 3px;
}

.exp-close {
    position: absolute;
    left: 187px;
    top: 24px;
}

.side-nav {
    padding-top: 16px;
}

.side-nav a {
    display: block;
    height: 30px;
    line-height: 30px;
    padding-left: 32px;
    color: #545b64;
    font-size: 13.300px;
    white-space: nowrap;
}

.side-group {
    height: 30px;
    line-height: 30px;
    margin-top: 12px;
    padding-left: 12px;
    display: flex;
    align-items: center;
    font-size: 13px;
    font-weight: 600;
    color: #545b64;
}

.side-group + a {
    margin-top: 1px;
}

.tri {
    width: 0;
    height: 0;
    border-left: 5.500px solid transparent;
    border-right: 5.500px solid transparent;
    border-top: 8px solid #545b64;
    margin-right: 9px;
}

.side-scroll {
    width: 16px;
    background: #f1f1f1;
    position: relative;
    padding-top: 17px;
}

.side-thumb {
    width: 14px;
    height: 190px;
    margin-left: 1px;
    background: #bcbcbc;
}

.arrow-up, .arrow-down {
    position: absolute;
    left: 4px;
    width: 0;
    height: 0;
    border-left: 4px solid transparent;
    border-right: 4px solid transparent;
}

.arrow-up {
    top: 6px;
    border-bottom: 5px solid #a3a3a3;
}

.arrow-down {
    bottom: 6px;
    border-top: 5px solid #505050;
}

.content {
    flex: 1;
    min-width: 0;
    display: flex;
    flex-direction: column;
}

.content-top {
    flex: 1;
    padding: 0 40px 0 39px;
}

.crumbs {
    height: 59px;
    display: flex;
    align-items: center;
    gap: 12px;
    padding-top: 3px;
    color: #545b64;
    font-size: 13px;
    font-weight: 600;
}

.crumbs a {
    color: #0073bb;
    font-size: 13.500px;
    font-weight: 400;
}

.card {
    background: #fafafa;
    border-top: 1px solid #eaeded;
    box-shadow: 0 1px 1px 0 rgba(0, 28, 36, .3), 1px 1px 1px 0 rgba(0, 28, 36, .15), -1px 1px 1px 0 rgba(0, 28, 36, .15);
}

.card-head {
    padding: 16px 0 0 20px;
    height: 155px;
    border-bottom: 1px solid #eaeded;
}

.card-head h2 {
    margin: 0;
    font-size: 17px;
    line-height: 24px;
    font-weight: 700;
    color: #16191f;
}

.card-head h2 span {
    font-weight: 400;
    color: #687078;
}

.card-head p {
    margin: 0;
    line-height: 18px;
    color: #16191f;
    white-space: nowrap;
}

.actions {
    display: flex;
    gap: 10px;
    margin-top: 11px;
}

.btn {
    height: 30px;
    border: 1px solid #545b64;
    border-radius: 2px;
    background: #fff;
    color: #545b64;
    font-family: inherit;
    font-size: 13.500px;
    font-weight: 700;
    display: flex;
    align-items: center;
    justify-content: center;
    padding: 0;
}

.btn-refresh {
    width: 48px;
}

.btn-actions {
    width: 113px;
    letter-spacing: .2px;
}

.btn-primary {
    width: 182px;
    background: #ff9900;
    border-color: #ff9900;
    color: #16191f;
}

.filter-row {
    display: flex;
    align-items: center;
    margin-top: 10px;
}

.filter {
    width: 728px;
    height: 30px;
    background: #fff;
    border: 1px solid #aab7b8;
    border-radius: 2px;
    display: flex;
    align-items: center;
    gap: 9px;
    padding-left: 10px;
    color: #879596;
    font-size: 14px;
}

.pager {
    display: flex;
    align-items: center;
    margin-left: 157px;
    color: #16191f;
}

.pager b {
    margin: 0 21px;
    font-weight: 600;
}

.pager-sep {
    width: 1px;
    height: 30px;
    background: #eaeded;
    margin: 0 16px;
}

.t-row {
    display: grid;
    grid-template-columns: 54px 201px 250px 124px 201px 200px 15px;
}

.t-header {
    height: 49px;
    border-bottom: 1px solid #eaeded;
    font-weight: 700;
    color: #545b64;
}

.t-body {
    height: 50px;
    background: #fff;
    color: #16191f;
}

.t-cell {
    display: flex;
    align-items: center;
    padding-left: 20px;
    position: relative;
    white-space: nowrap;
}

.t-header .t-cell {
    justify-content: space-between;
    padding-right: 20px;
}

.t-header .t-cell::after {
    content: "";
    position: absolute;
    right: 0;
    top: 13px;
    height: 24px;
    width: 1px;
    background: #eaeded;
}

.t-header .t-check {
    justify-content: flex-start;
}

.checkbox {
    width: 14px;
    height: 14px;
    background: #fff;
    border: 1px solid #aab7b8;
    border-radius: 2px;
}

.t-body .t-check {
    margin-top: -2px;
}

.sort {
    width: 0;
    height: 0;
    border-left: 5px solid transparent;
    border-right: 5px solid transparent;
    border-top: 8px solid #687078;
    position: relative;
}

.sort::after {
    content: "";
    position: absolute;
    left: -2.500px;
    top: -6.500px;
    border-left: 2.500px solid transparent;
    border-right: 2.500px solid transparent;
    border-top: 4px solid #fafafa;
}

.t-name {
    gap: 5px;
}

.t-name a {
    color: #0073bb;
}

.scribble {
    position: absolute;
    left: 30px;
    top: 39px;
}

.t-dns {
    gap: 10px;
    letter-spacing: .4px;
}

.t-vpc {
    display: block;
    padding-top: 5px;
    line-height: 20px;
    letter-spacing: .25px;
}

.dashed {
    border-bottom: 1px dashed #16191f;
    line-height: 17px;
    letter-spacing: .1px;
}

.h-scroll {
    height: 17px;
    background: #f1f1f1;
    display: flex;
    align-items: center;
    position: relative;
    border-bottom: 1px solid #aab7b8;
    padding: 0 17px;
}

.h-track {
    flex: 1;
    height: 14px;
}

.h-thumb {
    width: 640px;
    height: 14px;
    background: #bcbcbc;
}

.arrow-left, .arrow-right {
    position: absolute;
    top: 4px;
    width: 0;
    height: 0;
    border-top: 4px solid transparent;
    border-bottom: 4px solid transparent;
}

.arrow-left {
    left: 6px;
    border-right: 5px solid #a3a3a3;
}

.arrow-right {
    right: 6px;
    border-left: 5px solid #505050;
}

.split-panel {
    height: 65px;
    flex: none;
    background: #fff;
    border-top: 1px solid #d5dbdb;
    display: flex;
    align-items: center;
    justify-content: space-between;
    padding: 0 46px 2px 40px;
}

.split-panel h3 {
    margin: 0;
    font-size: 17px;
    font-weight: 700;
    color: #16191f;
}

/* console footer */
.aws-footer {
    height: 31px;
    flex: none;
    background: #232f3e;
    color: #fff;
    border-top: 1px solid #414750;
    border-bottom: 1px solid #5f6368;
    display: flex;
    align-items: center;
    padding: 0 16px;
    font-size: 11.500px;
    white-space: nowrap;
}

.aws-footer span {
    margin-right: 25px;
}

.aws-footer .cs {
    margin: 0 27px 0 5px;
}

.aws-footer .copy {
    margin-right: 30px;
    letter-spacing: .08px;
}

.foot-right {
    margin-left: auto;
    display: flex;
}

.aws-footer .foot-right span:last-child {
    margin-right: 0;
}

/* download shelf */
.downloads {
    height: 57px;
    flex: none;
    background: #353535;
    color: #e8eaed;
    display: flex;
    align-items: center;
    padding-left: 20px;
    font-size: 12px;
}

.dl-name {
    margin-left: 11px;
}

.dl-chev {
    margin-left: 23px;
}

.dl-sep {
    width: 1px;
    height: 44px;
    background: #5f6368;
    margin-left: 18px;
}

.show-all {
    margin-left: auto;
    width: 77px;
    height: 30px;
    background: transparent;
    border: 1px solid #2a2a2a;
    border-radius: 4px;
    color: #7fa8f0;
    font-family: inherit;
    font-size: 12px;
    font-weight: 500;
}

.dl-close {
    margin: 0 13px;
}

/* windows taskbar */
.taskbar {
    height: 40px;
    flex: none;
    background: linear-gradient(90deg, #0b1a29, #0c2233 45%, #0a1c2d);
    color: #fff;
    display: flex;
    align-items: stretch;
}

.start {
    width: 48px;
    display: flex;
    align-items: center;
    justify-content: center;
}

.win-search {
    width: 288px;
    background: #35495e;
    border: 1px solid #5c6f80;
    border-bottom: 0;
    display: flex;
    align-items: center;
    padding-left: 11px;
    gap: 12px;
    font-size: 14px;
    color: #e6edf3;
    position: relative;
    overflow: hidden;
}

.flower {
    position: absolute;
    right: -1px;
    top: -1px;
}

.task-view {
    width: 50px;
    display: flex;
    align-items: center;
    justify-content: center;
}

.task-icons {
    display: flex;
}

.task {
    width: 49px;
    display: flex;
    align-items: center;
    justify-content: center;
    position: relative;
}

.task.active {
    background: #0c3f6c;
}

.task.open::after {
    content: "";
    position: absolute;
    left: 5px;
    right: 4px;
    bottom: 0;
    height: 2px;
    background: #a6d8ff;
}

.s-badge {
    font-family: "Noto Sans", sans-serif;
    font-size: 9px;
    fill: #fff;
    text-anchor: middle;
}

.s-glyph {
    position: absolute;
    left: 19px;
    top: 6px;
    font-size: 16px;
    font-weight: 700;
}

.badge {
    position: absolute;
    border-radius: 50%;
    display: flex;
    align-items: center;
    justify-content: center;
    font-size: 11px;
    font-weight: 500;
}

.badge.red {
    width: 15px;
    height: 15px;
    right: 9px;
    bottom: 6px;
    background: #e8392f;
    font-size: 9px;
}

.badge.dark {
    width: 18px;
    height: 16px;
    right: 6px;
    bottom: 4px;
    background: #0f3a5c;
    border: 1px solid #7b95aa;
}

.badge.wa {
    width: 21px;
    right: 1px;
    bottom: 6px;
}

.tray {
    margin-left: auto;
    display: flex;
    align-items: center;
    gap: 9px;
}

.clock {
    width: 62px;
    font-size: 12px;
    text-align: center;
    line-height: 20px;
    margin: 0 -2px;
    white-space: nowrap;
}

.notif {
    width: 46px;
    height: 40px;
    position: relative;
    display: flex;
    align-items: center;
    justify-content: center;
    margin: 0 10px 0 -9px;
}
```
